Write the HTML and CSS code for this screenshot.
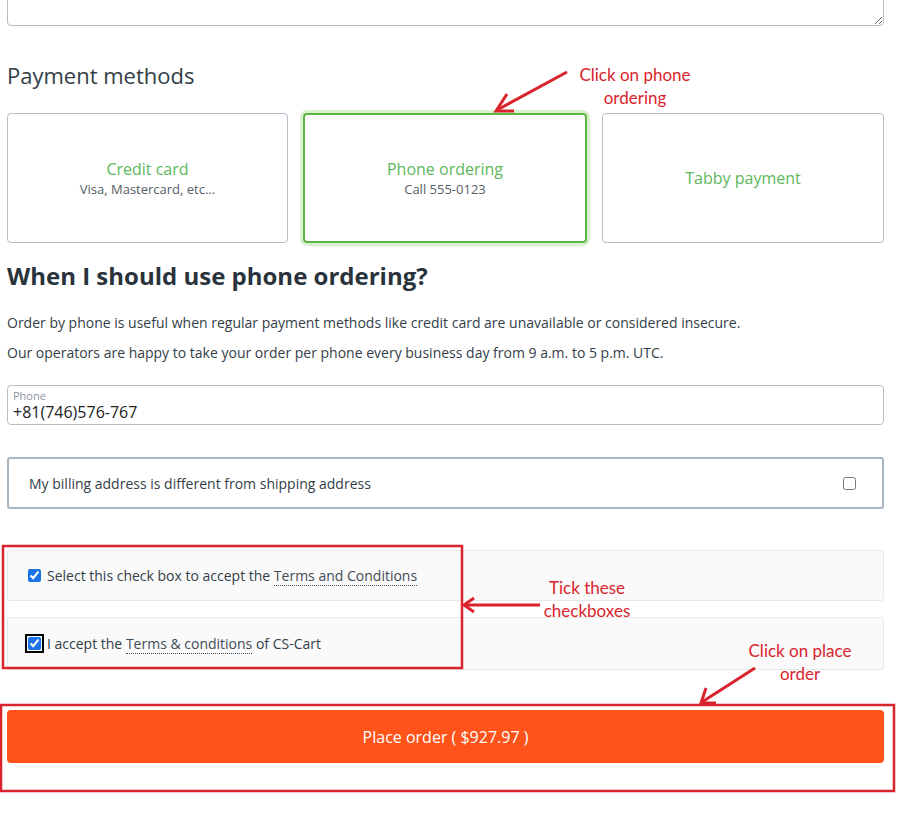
FILE: index.html
```html
<!DOCTYPE html>
<html lang="en">
<head>
    <meta charset="UTF-8">
    <meta name="viewport" content="width=device-width, initial-scale=1.0">
    <title>Checkout - Payment</title>
    <link rel="stylesheet" href="styles.css">
</head>
<body>
    <div class="checkout">
        <textarea class="notes" aria-label="Order notes"></textarea>

        <h3 class="section-title">Payment methods</h3>

        <div class="methods">
            <div class="method">
                <span class="method-name">Credit card</span>
                <span class="method-desc">Visa, Mastercard, etc...</span>
            </div>
            <div class="method active">
                <span class="method-name">Phone ordering</span>
                <span class="method-desc">Call 555-0123</span>
            </div>
            <div class="method">
                <span class="method-name">Tabby payment</span>
            </div>
        </div>

        <h2 class="info-title">When I should use phone ordering?</h2>
        <p class="info-text">Order by phone is useful when regular payment methods like credit card are unavailable or considered insecure.</p>
        <p class="info-text">Our operators are happy to take your order per phone every business day from 9 a.m. to 5 p.m. UTC.</p>

        <label class="field">
            <span class="field-label">Phone</span>
            <input class="field-input" type="text" value="+81(746)576-767">
        </label>

        <label class="billing">
            <span>My billing address is different from shipping address</span>
            <input type="checkbox">
        </label>

        <div class="terms terms-first">
            <label class="terms-row">
                <input type="checkbox" checked>
                <span>Select this check box to accept the <a class="terms-link">Terms and Conditions</a></span>
            </label>
        </div>
        <div class="terms terms-second">
            <label class="terms-row">
                <input type="checkbox" class="focused" checked>
                <span>I accept the <a class="terms-link">Terms &amp; conditions</a> of CS-Cart</span>
            </label>
        </div>

        <button class="place-order">Place order ( $927.97 )</button>
    </div>

    <!-- annotations drawn over the page -->
    <svg class="marks" width="898" height="817" aria-hidden="true">
        <g stroke="#d9232d" stroke-width="3" fill="none">
            <line x1="567" y1="72" x2="497" y2="110"/>
            <polyline points="507,94 496,111 514,111"/>
            <line x1="540" y1="605" x2="465" y2="605"/>
            <polyline points="474,598 464,605 474,612"/>
            <line x1="755" y1="668" x2="702" y2="702"/>
            <polyline points="706,688 701,703 716,703"/>
            <rect x="3" y="546" width="459" height="122" stroke-width="2.5"/>
            <rect x="1" y="705" width="893" height="86" stroke-width="2.5"/>
        </g>
    </svg>
    <div class="note note-phone">Click on phone<br>ordering</div>
    <div class="note note-tick">Tick these<br>checkboxes</div>
    <div class="note note-order">Click on place<br>order</div>
</body>
</html>
```

FILE: styles.css
```css
body {
    margin: 0;
    font-family: "Open Sans", sans-serif;
    color: #333e48;
    background: #fff;
    position: relative;
    height: 817px;
    overflow: hidden;
}

.checkout {
    width: 877px;
    margin: -20px 0 0 7px;
    display: flex;
    flex-direction: column;
}

.notes {
    height: 46px;
    border: 1px solid #b3bdc8;
    border-radius: 4px;
    padding: 0;
    margin: 0;
    resize: vertical;
    box-sizing: border-box;
}

.section-title {
    font-size: 22px;
    font-weight: 400;
    line-height: 29px;
    margin: 35px 0 23px;
    color: #333e48;
}

.methods {
    display: grid;
    grid-template-columns: 281px 284px 282px;
    column-gap: 15px;
}

.method {
    height: 130px;
    box-sizing: border-box;
    border: 1px solid #b3bdc8;
    border-radius: 4px;
    display: flex;
    flex-direction: column;
    align-items: center;
    justify-content: center;
    text-align: center;
}

.method.active {
    border: 2px solid #5db447;
    box-shadow: 0 0 0 3px #d9f1cf;
}

.method-name {
    color: #5cb85c;
    font-size: 16px;
    line-height: 22px;
}

.method-desc {
    color: #555d66;
    font-size: 13px;
    line-height: 18px;
}

.info-title {
    font-size: 24px;
    font-weight: 700;
    line-height: 32px;
    margin: 17px 0 21px;
    color: #2a333b;
}

.info-text {
    font-size: 14px;
    line-height: 20px;
    margin: 0 0 10px;
}

.field {
    margin-top: 12px;
    height: 40px;
    box-sizing: border-box;
    border: 1px solid #b3bdc8;
    border-radius: 4px;
    padding: 3px 5px 0;
    display: flex;
    flex-direction: column;
}

.field-label {
    font-size: 11px;
    line-height: 13px;
    color: #8d959d;
}

.field-input {
    border: none;
    outline: none;
    padding: 0;
    font-family: inherit;
    font-size: 16px;
    line-height: 20px;
    color: #222;
}

.billing {
    margin-top: 32px;
    height: 52px;
    box-sizing: border-box;
    border: 2px solid #a9b6c4;
    border-radius: 3px;
    padding: 0 26px 0 20px;
    display: flex;
    align-items: center;
    justify-content: space-between;
    font-size: 14px;
}

.billing input {
    width: 13px;
    height: 13px;
    margin: 0;
}

.terms {
    box-sizing: border-box;
    border: 1px solid #e6e8ea;
    border-radius: 3px;
    background: #fafafa;
    display: flex;
    align-items: center;
    padding-left: 20px;
    font-size: 14px;
}

.terms-first {
    height: 51px;
    margin-top: 41px;
}

.terms-second {
    height: 53px;
    margin-top: 16px;
}

.terms-row {
    display: flex;
    align-items: center;
    gap: 6px;
}

.terms-row input {
    width: 13px;
    height: 13px;
    margin: 0;
    accent-color: #1a73e8;
}

.terms-row input.focused {
    outline: 2px solid #000;
    outline-offset: 1px;
    border-radius: 2px;
}

.terms-link {
    color: #414b55;
    border-bottom: 1px dotted #414b55;
    text-decoration: none;
}

.place-order {
    margin-top: 40px;
    height: 53px;
    border: none;
    border-radius: 4px;
    background: #ff5319;
    color: #fff;
    font-family: inherit;
    font-size: 16px;
}

.marks {
    position: absolute;
    top: 0;
    left: 0;
    pointer-events: none;
}

.note {
    position: absolute;
    color: #d9232d;
    font-family: Lato, sans-serif;
    font-size: 17px;
    line-height: 23px;
    text-align: center;
}

.note-phone { left: 574px; top: 63px; width: 122px; }
.note-tick { left: 527px; top: 576px; width: 120px; }
.note-order { left: 740px; top: 639px; width: 120px; }
```
